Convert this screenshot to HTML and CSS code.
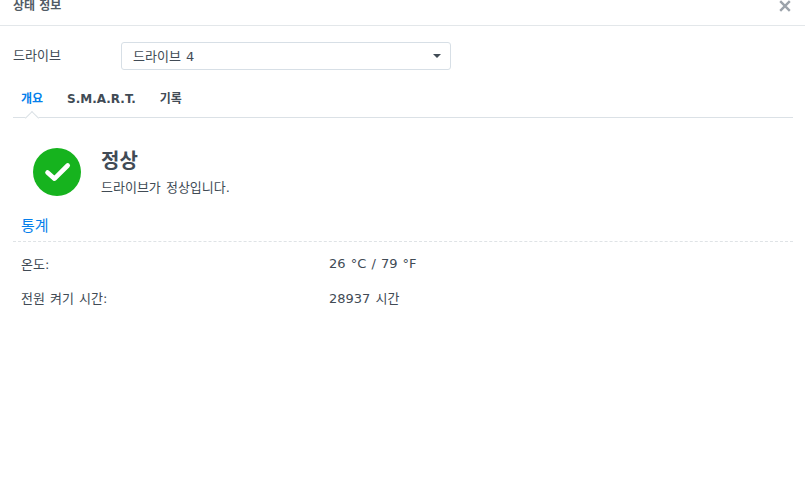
FILE: index.html
```html
<!DOCTYPE html>
<html lang="ko">
<head>
<meta charset="utf-8">
<title>상태 정보</title>
<link rel="stylesheet" href="styles.css">
</head>
<body>
<header class="titlebar">
  <span class="title">상태 정보</span>
  <svg class="close" width="12" height="12" viewBox="0 0 12 12"><path d="M1.2 1.2 10.8 10.8M10.8 1.2 1.2 10.8" fill="none" stroke="#9ca3ab" stroke-width="2.4"/></svg>
</header>
<main class="content">
  <div class="drive-row">
    <span class="drive-label">드라이브</span>
    <div class="select">
      <span>드라이브 4</span>
      <span class="caret"></span>
    </div>
  </div>
  <nav class="tabs">
    <span class="tab active">개요</span>
    <span class="tab">S.M.A.R.T.</span>
    <span class="tab">기록</span>
    <span class="notch"></span>
  </nav>
  <section class="status">
    <svg class="status-icon" width="48" height="48" viewBox="0 0 48 48"><circle cx="24" cy="24" r="24" fill="#16b31e"/><path d="M14.5 24.5 21.5 30.7 34.7 17.5" fill="none" stroke="#fff" stroke-width="4.6" stroke-linecap="round" stroke-linejoin="round"/></svg>
    <div class="status-text">
      <div class="status-title">정상</div>
      <div class="status-desc">드라이브가 정상입니다.</div>
    </div>
  </section>
  <h2 class="section-title">통계</h2>
  <dl class="stats">
    <div class="stat"><dt>온도:</dt><dd>26 °C / 79 °F</dd></div>
    <div class="stat"><dt>전원 켜기 시간:</dt><dd>28937 시간</dd></div>
  </dl>
</main>
</body>
</html>
```
FILE: styles.css
```css
* { box-sizing: border-box; }
html, body { margin: 0; padding: 0; }
body {
  width: 805px;
  height: 502px;
  overflow: hidden;
  background: #fff;
  color: #414b55;
  font-family: "DejaVu Sans", "Noto Sans CJK KR", sans-serif;
  font-size: 13px;
  word-spacing: 1px;
}
.titlebar {
  height: 26px;
  border-bottom: 1px solid #e3e7ea;
  padding: 0 14px 0 13px;
  display: flex;
  justify-content: space-between;
  align-items: flex-start;
}
.title {
  font-size: 12px;
  font-weight: 700;
  line-height: 12px;
  word-spacing: 0;
  color: #525c66;
}
.close { margin-top: 0; }
.content { padding: 16px 12px 0 13px; }
.drive-row { display: flex; align-items: center; height: 28px; }
.drive-label { width: 108px; line-height: 28px; }
.select {
  width: 330px;
  height: 28px;
  border: 1px solid #d7dfe6;
  border-radius: 3px;
  padding: 0 9px 2px 11px;
  display: flex;
  align-items: center;
  justify-content: space-between;
}
.caret {
  width: 0;
  height: 0;
  margin-top: 2px;
  border-left: 4.5px solid transparent;
  border-right: 4.5px solid transparent;
  border-top: 4.5px solid #414b55;
}
.tabs {
  position: relative;
  display: flex;
  gap: 24px;
  margin-top: 12px;
  height: 36px;
  padding: 8px 0 0 8px;
  border-bottom: 1px solid #dbe1e6;
  font-size: 12px;
}
.tab { font-weight: 700; line-height: 18px; }
.tab.active { color: #057feb; }
.notch {
  position: absolute;
  left: 14px;
  bottom: -1px;
  width: 10px;
  height: 10px;
  background: #fff;
  border-left: 1px solid #dbe1e6;
  border-top: 1px solid #dbe1e6;
  transform: translateY(5px) rotate(45deg);
}
.status { display: flex; margin-top: 30px; padding-left: 20px; }
.status-text { margin-left: 20px; margin-top: -1px; }
.status-title { font-size: 20px; font-weight: 700; line-height: 28px; }
.status-desc { line-height: 18px; margin-top: 4px; }
.section-title {
  margin: 17px 0 0;
  padding: 0 0 4px 8px;
  height: 28px;
  font-size: 15px;
  font-weight: 400;
  line-height: 24px;
  color: #057feb;
  border-bottom: 1px dashed #dfe3e6;
}
.stats { margin: 4px 0 0; }
.stat { display: flex; height: 34px; align-items: center; padding-left: 8px; }
.stat dt { width: 308px; }
.stat dd { margin: 0; }
```
